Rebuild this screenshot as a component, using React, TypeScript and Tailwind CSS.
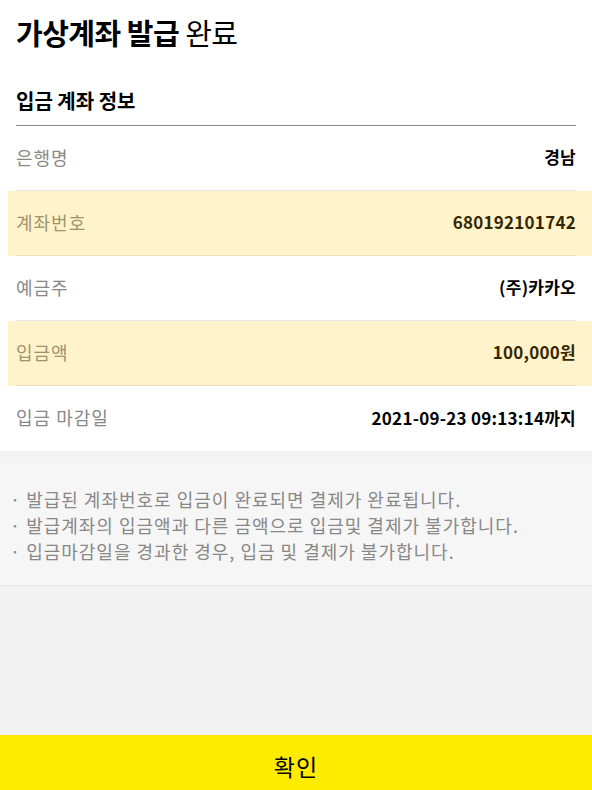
import React from "react";

const rows = [
  { label: "은행명", value: "경남", hl: false },
  { label: "계좌번호", value: "680192101742", hl: true },
  { label: "예금주", value: "(주)카카오", hl: false },
  { label: "입금액", value: "100,000원", hl: true },
  { label: "입금 마감일", value: "2021-09-23 09:13:14까지", hl: false, last: true },
];

export default function App() {
  return (
    <div
      className="flex min-h-[790px] w-[592px] flex-col bg-[#f2f2f2] text-black"
      style={{ fontFamily: '"Noto Sans CJK KR", "Noto Sans", sans-serif' }}
    >
      <div className="bg-white px-4">
        <h1 className="pt-[12px] text-[29px] leading-[40px] tracking-[-0.5px]">
          <span className="font-bold">가상계좌 발급</span> <span>완료</span>
        </h1>
        <h2 className="mt-[35px] border-b border-[#888888] pb-[10px] text-[20px] font-bold leading-[28px]">
          입금 계좌 정보
        </h2>
        <ul>
          {rows.map((r) => (
            <li
              key={r.label}
              className={`relative flex h-[65px] items-center justify-between pb-[2px] ${r.last ? "" : "border-b border-[#e8e8e8]"}`}
            >
              <span className="text-[18px] tracking-[1px] text-[#888888]">{r.label}</span>
              <span className="text-[17px] font-bold tracking-[0.25px]">{r.value}</span>
              {r.hl && (
                <div className="pointer-events-none absolute -left-2 -right-4 top-0 -bottom-px bg-[rgba(255,196,0,0.2)]" />
              )}
            </li>
          ))}
        </ul>
      </div>
      <div className="mt-[12px] border-b border-[#e5e5e5] bg-[#f6f6f6] px-[10px] pb-[21px] pt-[23px] text-[18px] leading-[26px] tracking-[1px] text-[#888888]">
        <p>· 발급된 계좌번호로 입금이 완료되면 결제가 완료됩니다.</p>
        <p>· 발급계좌의 입금액과 다른 금액으로 입금및 결제가 불가합니다.</p>
        <p>· 입금마감일을 경과한 경우, 입금 및 결제가 불가합니다.</p>
      </div>
      <div className="flex-1" />
      <button className="flex h-[55px] w-full items-center justify-center bg-[#ffeb00] pt-[8px] text-[23px] tracking-[1px]">
        확인
      </button>
    </div>
  );
}
